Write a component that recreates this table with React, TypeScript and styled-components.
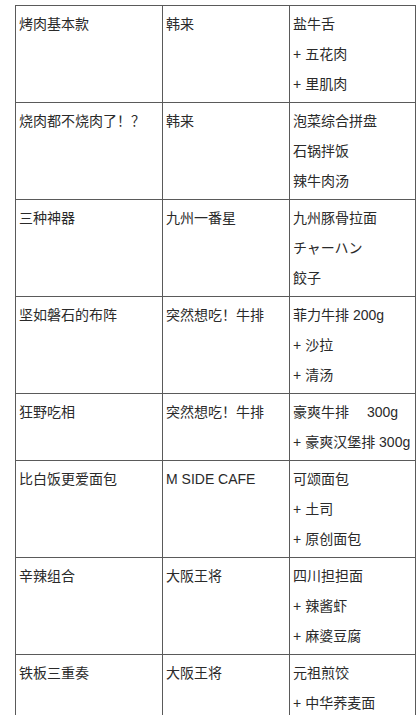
import styled, { createGlobalStyle } from 'styled-components'
import { ReactElement } from 'react'

const GlobalStyle = createGlobalStyle`
  body {
    margin: 0;
    background: #ffffff;
    font-family: "Liberation Sans", "Noto Sans CJK SC", sans-serif;
    color: #2a2a2a;
  }
`

const Page = styled.div`
  padding: 5px 0 0 15px;
`

const MenuTable = styled.table`
  width: 400px;
  border-collapse: collapse;
  table-layout: fixed;
  font-size: 14px;
`

const Col = styled.col<{ $w: number }>`
  width: ${p => p.$w}px;
`

const Cell = styled.td`
  border: 1px solid #5a5a5a;
  padding: 3px;
  vertical-align: top;
  line-height: 30px;
  white-space: nowrap;
`

const Line = styled.div`
  height: 30px;
`

const Plus = styled.span`
  margin-right: 4px;
`

interface Course {
  name: string
  shop: string
  dishes: string[]
}

const courses: Course[] = [
  { name: '烤肉基本款', shop: '韩来', dishes: ['盐牛舌', '+五花肉', '+里肌肉'] },
  { name: '烧肉都不烧肉了！？', shop: '韩来', dishes: ['泡菜综合拼盘', '石锅拌饭', '辣牛肉汤'] },
  { name: '三种神器', shop: '九州一番星', dishes: ['九州豚骨拉面', 'チャーハン', '餃子'] },
  { name: '坚如磐石的布阵', shop: '突然想吃！牛排', dishes: ['菲力牛排 200g', '+沙拉', '+清汤'] },
  { name: '狂野吃相', shop: '突然想吃！牛排', dishes: ['豪爽牛排\u3000 300g', '+豪爽汉堡排 300g'] },
  { name: '比白饭更爱面包', shop: 'M SIDE CAFE', dishes: ['可颂面包', '+土司', '+原创面包'] },
  { name: '辛辣组合', shop: '大阪王将', dishes: ['四川担担面', '+辣酱虾', '+麻婆豆腐'] },
  { name: '铁板三重奏', shop: '大阪王将', dishes: ['元祖煎饺', '+中华荞麦面'] }
]

function renderDish (dish: string, idx: number): ReactElement {
  if (dish.startsWith('+')) {
    return <Line key={idx}><Plus>+</Plus>{dish.slice(1)}</Line>
  }
  return <Line key={idx}>{dish}</Line>
}

export default function App (): ReactElement {
  return <Page>
    <GlobalStyle />
    <MenuTable>
      <colgroup>
        <Col $w={147} />
        <Col $w={127} />
        <Col $w={126} />
      </colgroup>
      <tbody>
        {courses.map((c, i) => (
          <tr key={i}>
            <Cell>{c.name}</Cell>
            <Cell>{c.shop}</Cell>
            <Cell>{c.dishes.map(renderDish)}</Cell>
          </tr>
        ))}
      </tbody>
    </MenuTable>
  </Page>
}
